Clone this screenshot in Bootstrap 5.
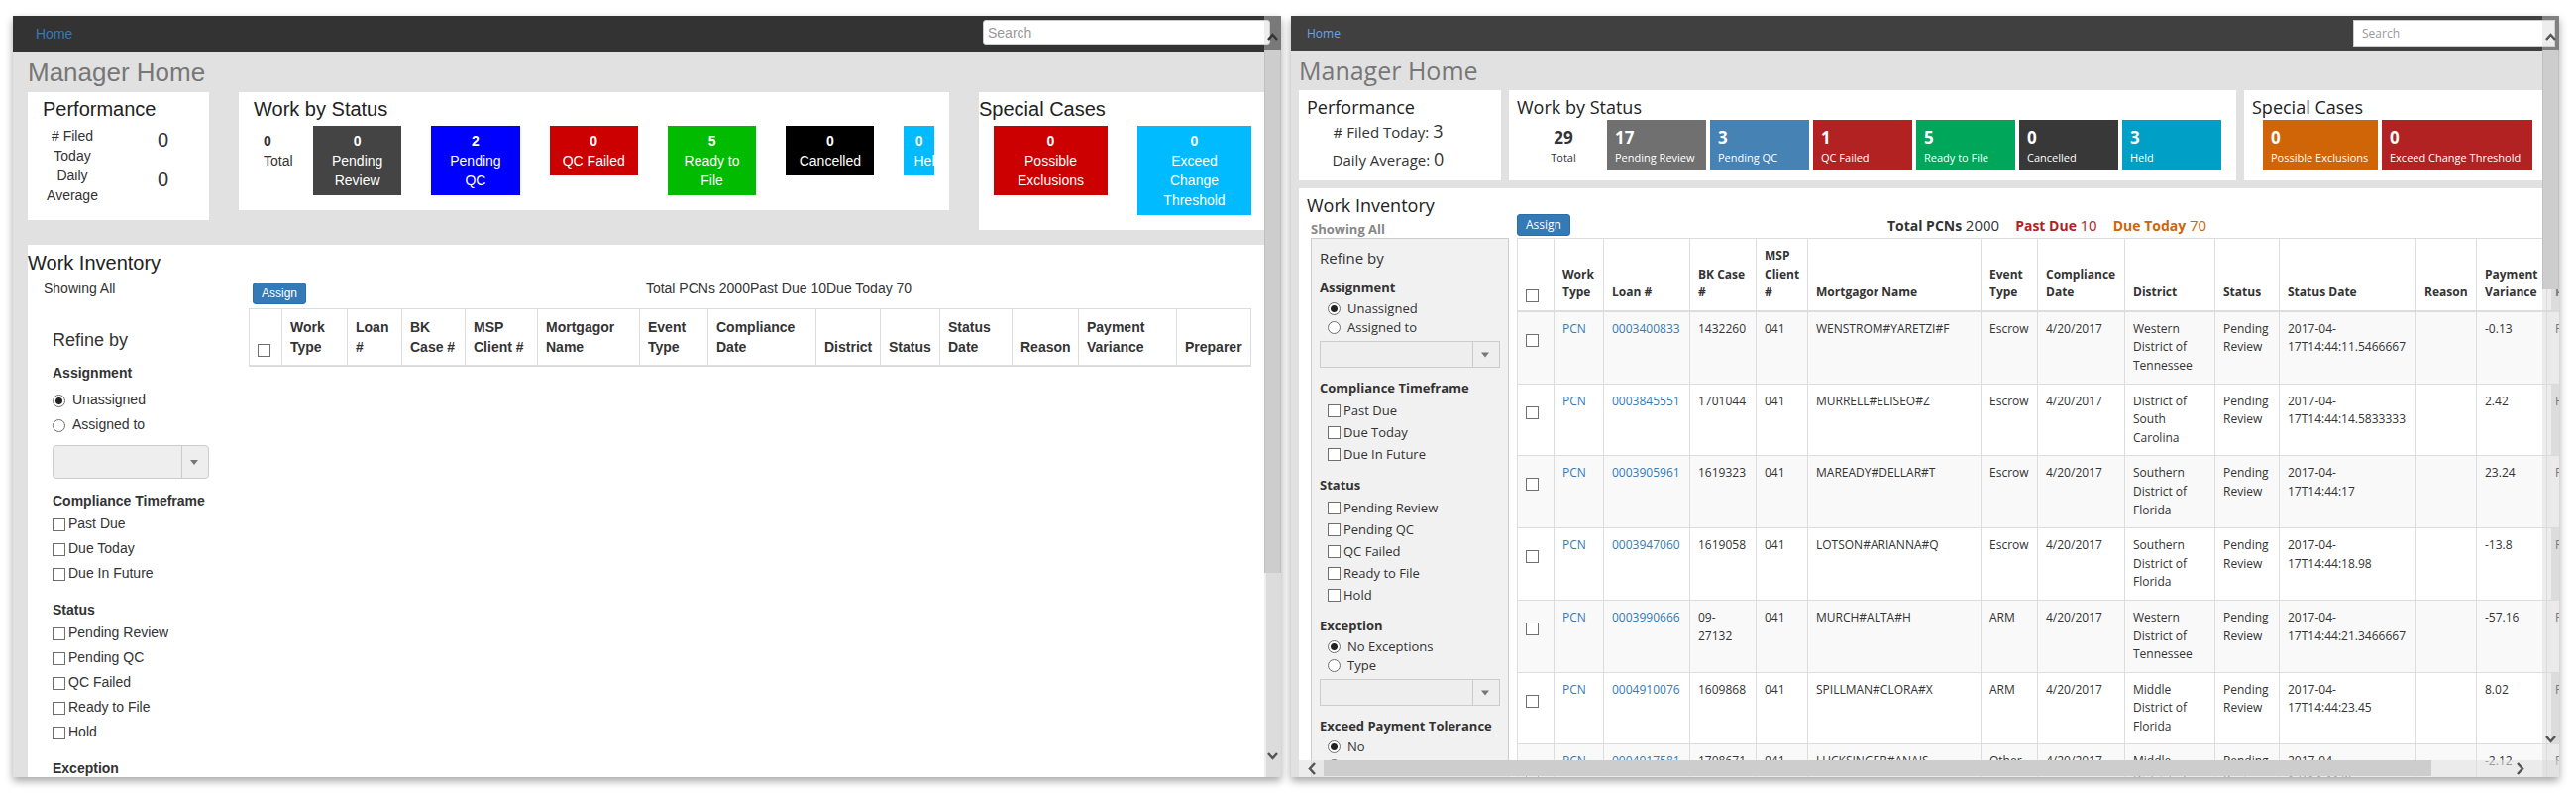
<!DOCTYPE html>
<html lang="en">
<head>
<meta charset="utf-8">
<meta name="viewport" content="width=device-width, initial-scale=1">
<title>Manager Home</title>
<link href="https://cdn.jsdelivr.net/npm/bootstrap@5.3.0/dist/css/bootstrap.min.css" rel="stylesheet">
<style>
  body { background: #fff; color: #333; font-family: "Liberation Sans", Arial, sans-serif; font-size: 14px; line-height: 20px; }
  a { color: #337ab7; text-decoration: none; }
  .desk { padding: 16px 17px 16px 13px; gap: 10px; }
  .screen { background: #e1e1e1; box-shadow: 0 4px 8px rgba(0,0,0,.35); min-width: 0; flex: 1 1 0; }
  .pane { background: #fff; min-width: 0; }
  h1, h2, h3, h4 { font-weight: 400; margin: 0; }
  h1 { color: #777; }
  h2 { color: #222; }
  .btn-assign { --bs-btn-color: #fff; --bs-btn-bg: #337ab7; --bs-btn-border-color: #2e6da4; --bs-btn-hover-bg: #286090; --bs-btn-hover-color: #fff;
    --bs-btn-padding-x: 8px; --bs-btn-padding-y: 1px; --bs-btn-font-size: 12px; --bs-btn-border-radius: 3px; line-height: 18px; }
  .tick { appearance: none; flex: none; width: 13px; height: 13px; margin: 0; border: 1px solid #707070; background: #fff; }
  .tick[type=radio] { border-radius: 50%; }
  .tick[type=radio]:checked { background: radial-gradient(circle, #222 0 3px, #fff 4px); }
  .pick { appearance: none; display: block; width: 100%; border: 1px solid #ccc; opacity: 1;
    background: url("data:image/svg+xml,%3Csvg xmlns='http://www.w3.org/2000/svg' width='27' height='34'%3E%3Cpath d='M.5 0v34' stroke='%23ccc'/%3E%3Cpath d='M9 15h8l-4 5z' fill='%23777'/%3E%3C/svg%3E") right center no-repeat #eee; }
  .find { border: 1px solid #ccc; background: #fff; color: #333; }
  .find::placeholder { color: #999; opacity: 1; }
  .grid-table { table-layout: fixed; margin: 0; border-collapse: collapse; color: #333; }
  .grid-table th, .grid-table td { border: 1px solid #ddd; padding: 8px; vertical-align: top; text-align: left; }
  .grid-table th { vertical-align: bottom; border-bottom-width: 2px; }
  .grid-table .tick { display: block; }

  /* overlay scroll bars */
  .bar-y { position: absolute; top: 0; right: 0; bottom: 0; width: 17px; background: rgba(214,214,214,.43); }
  .bar-y .thumb { position: absolute; left: 0; right: 0; top: 34px; background: #cdcdcd; border: 1px solid #c0c0c0; border-width: 0 1px; }
  .bar-y .up { position: absolute; left: 3px; top: 16px; }
  .bar-y .down { position: absolute; left: 3px; }
  .bar-x { position: absolute; left: 8px; right: 0; bottom: 0; height: 17px; background: rgba(225,225,225,.6); }
  .bar-x .thumb { position: absolute; left: 25px; right: 129px; top: 0; bottom: 1px; background: #cdcdcd; }
  .bar-x .back { position: absolute; left: 8px; top: 2px; }
  .bar-x .next { position: absolute; right: 34px; top: 2px; }

  /* first screen */
  .old .topbar { background: #333; height: 36px; padding: 0 11px 0 23px; }
  .old .find { width: 290px; height: 25px; border-radius: 3px; padding: 0 4px; margin-bottom: 3px; }
  .old .page { padding: 7px 15px 0; }
  .old h1 { font-size: 26px; line-height: 29px; margin-bottom: 5px; }
  .old h2 { font-size: 20px; line-height: 22px; margin-bottom: 6px; }
  .old .summary { display: grid; grid-template-columns: 183fr 717fr 290fr; gap: 30px; align-items: start; }
  .old .summary .pane { padding: 6px 15px 15px; }
  .old .perf { display: grid; grid-template-columns: 60px 1fr; column-gap: 15px; margin-right: -15px; text-align: center; }
  .old .perf dt { font-weight: 400; }
  .old .perf dd { font-size: 20px; line-height: 28px; margin: 0; }
  .old .tiles { gap: 30px; }
  .old .tile { flex: 0 0 13%; padding: 5px 10px; color: #fff; text-align: center; }
  .old .tile.sum { flex: 0 0 30px; min-width: 0; padding-right: 0; color: #333; text-align: left; }
  .old .tile.rest { flex: 1 1 0; min-width: 0; overflow: hidden; white-space: nowrap; }
  .old .cases .tile { flex: 1 1 0; }
  .old .flush { margin-left: -15px; }
  .old .inventory { margin-top: 15px; padding: 7px 15px 0 0; }
  .old .inventory h2 { margin-bottom: 5px; }
  .old .side { flex: 0 0 223px; padding-right: 40px; }
  .old .refine { padding: 32px 0 0 25px; }
  .old .refine h3 { font-size: 18px; line-height: 20px; margin-bottom: 1px; }
  .old .refine h4 { font-size: 14px; line-height: 20px; font-weight: 700; padding: 12px 0 3px; white-space: nowrap; }
  .old .opt { display: flex; align-items: center; gap: 3px; padding-bottom: 5px; }
  .old .opt.round { gap: 7px; }
  .old .opt .tick { margin-top: 3px; }
  .old .pick { height: 34px; border-radius: 4px; margin-top: 6px; }
  .old .tools { height: 26px; margin: 0 0 4px 4px; }

  /* second screen */
  .new { font-family: "Open Sans", "Noto Sans", sans-serif; font-size: 13px; }
  .new .topbar { background: #404040; height: 35px; padding: 0 4px 0 16px; font-size: 12px; }
  .new .topbar a { color: #68a5e6; }
  .new .find { width: 204px; height: 27px; padding: 0 8px; }
  .new .page { padding: 3px 8px 0; }
  .new h1 { font-size: 25px; line-height: 34px; margin-bottom: 3px; }
  .new h2 { font-size: 18px; line-height: 24px; margin-bottom: 1px; }
  .new .summary { display: grid; grid-template-columns: 204fr 734fr 310fr; gap: 8px; }
  .new .summary .pane { padding: 5px 8px 10px; }
  .new .perf { height: 51px; padding-right: 24px; text-align: center; font-size: 15px; line-height: 25px; }
  .new .perf div { margin-bottom: 3px; }
  .new .perf span { font-size: 18px; line-height: 18px; }
  .new .tiles { gap: 4px; padding-right: 7px; }
  .new .tile { flex: 1 1 0; padding: 7px 8px 4px; color: #fff; font-size: 11px; line-height: 18px; white-space: nowrap; }
  .new .tile b { font-size: 17px; line-height: 22px; }
  .new .tile.sum { flex: 0 0 87px; color: #333; text-align: center; padding-left: 15px; }
  .new .cases .tiles { padding: 0 11px; }
  .new .cases .tile { flex: 100 1 0; }
  .new .cases .tile.wide { flex-grow: 136; }
  .new .inventory { margin-top: 8px; }
  .new .side { flex: 0 0 212px; padding: 5px 0 0 12px; }
  .new .side h2 { margin: 0 0 3px -4px; }
  .new .showing { color: #888; font-weight: 700; line-height: 18px; }
  .new .refine { background: #f1f1f1; border: 1px solid #ccc; padding: 9px 8px 40px; }
  .new .refine h3 { font-size: 15px; line-height: 20px; }
  .new .refine h4 { font-size: 13px; line-height: 20px; font-weight: 700; padding: 10px 0 2px; white-space: nowrap; }
  .new .opt { display: flex; align-items: center; gap: 3px; padding-left: 8px; line-height: 22px; }
  .new .opt.round { gap: 7px; line-height: 19px; }
  .new .pick { height: 27px; margin-top: 4px; }
  .new .work { flex: 1 1 0; min-width: 0; padding: 26px 0 0 8px; }
  .new .tools { height: 22px; margin-bottom: 2px; }
  .new .counts { gap: 16px; padding-right: 28px; font-size: 14px; }
  .new .counts span { font-size: 15px; }
  .late { color: #b22222; }
  .today { color: #d06508; }
  .new .grid-table { width: 1140px; font-size: 12px; line-height: 1.55; }
  .new .grid-table tbody tr:nth-child(odd) { background: #f9f9f9; }
  .new .grid-table td .tick { margin-top: 14px; }
</style>
</head>
<body>
<div class="desk d-flex vh-100">

  <section class="screen old position-relative overflow-hidden d-flex flex-column">
    <nav class="topbar d-flex align-items-center justify-content-between flex-shrink-0">
      <a href="#">Home</a>
      <input class="find" type="search" placeholder="Search" aria-label="Search">
    </nav>
    <main class="page d-flex flex-column flex-grow-1">
      <h1>Manager Home</h1>
      <div class="summary">
        <div class="pane">
          <h2>Performance</h2>
          <dl class="perf mb-0">
            <dt># Filed Today</dt><dd>0</dd>
            <dt>Daily Average</dt><dd>0</dd>
          </dl>
        </div>
        <div class="pane">
          <h2>Work by Status</h2>
          <div class="tiles d-flex align-items-start">
            <div class="tile sum"><b class="d-block">0</b>Total</div>
            <div class="tile" style="background:#444"><b class="d-block">0</b>Pending Review</div>
            <div class="tile" style="background:#00f"><b class="d-block">2</b>Pending QC</div>
            <div class="tile" style="background:#c00"><b class="d-block">0</b>QC Failed</div>
            <div class="tile" style="background:#0b0"><b class="d-block">5</b>Ready to File</div>
            <div class="tile" style="background:#000"><b class="d-block">0</b>Cancelled</div>
            <div class="tile rest" style="background:#0bf"><b class="d-block">0</b>Held</div>
          </div>
        </div>
        <div class="pane cases">
          <h2 class="flush">Special Cases</h2>
          <div class="tiles d-flex align-items-start">
            <div class="tile" style="background:#c00"><b class="d-block">0</b>Possible Exclusions</div>
            <div class="tile" style="background:#0bf"><b class="d-block">0</b>Exceed Change Threshold</div>
          </div>
        </div>
      </div>
      <div class="pane inventory flex-grow-1">
        <h2>Work Inventory</h2>
        <div class="d-flex">
          <div class="side">
            <div class="ps-3">Showing All</div>
            <form class="refine">
              <h3>Refine by</h3>
              <h4>Assignment</h4>
              <div class="pt-1">
                <label class="opt round"><input class="tick" type="radio" name="a1" checked>Unassigned</label>
                <label class="opt round"><input class="tick" type="radio" name="a1">Assigned to</label>
              </div>
              <select class="pick" disabled aria-label="Assigned to"><option></option></select>
              <h4>Compliance Timeframe</h4>
              <label class="opt"><input class="tick" type="checkbox">Past Due</label>
              <label class="opt"><input class="tick" type="checkbox">Due Today</label>
              <label class="opt"><input class="tick" type="checkbox">Due In Future</label>
              <h4>Status</h4>
              <label class="opt"><input class="tick" type="checkbox">Pending Review</label>
              <label class="opt"><input class="tick" type="checkbox">Pending QC</label>
              <label class="opt"><input class="tick" type="checkbox">QC Failed</label>
              <label class="opt"><input class="tick" type="checkbox">Ready to File</label>
              <label class="opt"><input class="tick" type="checkbox">Hold</label>
              <h4>Exception</h4>
            </form>
          </div>
          <div class="flex-grow-1">
            <div class="tools d-flex">
              <button class="btn btn-assign align-self-end" type="button">Assign</button>
              <div class="flex-grow-1 text-center">Total PCNs 2000Past Due 10Due Today 70</div>
            </div>
            <table class="grid-table w-100">
              <colgroup>
                <col style="width:33px"><col style="width:66px"><col style="width:55px"><col style="width:64px"><col style="width:73px"><col style="width:103px"><col style="width:69px"><col style="width:109px"><col style="width:65px"><col style="width:60px"><col style="width:73px"><col style="width:67px"><col style="width:99px"><col style="width:75px">
              </colgroup>
              <thead>
                <tr>
                  <th><input class="tick" type="checkbox" aria-label="Select all"></th>
                  <th>Work Type</th><th>Loan #</th><th>BK Case #</th><th>MSP Client #</th><th>Mortgagor Name</th><th>Event Type</th><th>Compliance Date</th><th>District</th><th>Status</th><th>Status Date</th><th>Reason</th><th>Payment Variance</th><th>Preparer</th>
                </tr>
              </thead>
            </table>
          </div>
        </div>
      </div>
    </main>
    <div class="bar-y">
      <div class="thumb" style="height:528px"></div>
      <svg class="up" width="11" height="10" viewBox="0 0 11 10"><path d="M1 8l4.500-5L10 8" fill="none" stroke="#333" stroke-width="2.500"/></svg>
      <svg class="down" style="bottom:16px" width="11" height="10" viewBox="0 0 11 10"><path d="M1 2l4.500 5L10 2" fill="none" stroke="#555" stroke-width="2.500"/></svg>
    </div>
  </section>

  <section class="screen new position-relative overflow-hidden d-flex flex-column">
    <nav class="topbar d-flex align-items-center justify-content-between flex-shrink-0">
      <a href="#">Home</a>
      <input class="find" type="search" placeholder="Search" aria-label="Search">
    </nav>
    <main class="page d-flex flex-column flex-grow-1">
      <h1>Manager Home</h1>
      <div class="summary">
        <div class="pane">
          <h2>Performance</h2>
          <div class="perf">
            <div># Filed Today: <span>3</span></div>
            <div>Daily Average: <span>0</span></div>
          </div>
        </div>
        <div class="pane">
          <h2>Work by Status</h2>
          <div class="tiles d-flex">
            <div class="tile sum"><b class="d-block">29</b>Total</div>
            <div class="tile" style="background:#707070"><b class="d-block">17</b>Pending Review</div>
            <div class="tile" style="background:#4682b4"><b class="d-block">3</b>Pending QC</div>
            <div class="tile" style="background:#b22222"><b class="d-block">1</b>QC Failed</div>
            <div class="tile" style="background:#00a65a"><b class="d-block">5</b>Ready to File</div>
            <div class="tile" style="background:#383838"><b class="d-block">0</b>Cancelled</div>
            <div class="tile" style="background:#00a0c6"><b class="d-block">3</b>Held</div>
          </div>
        </div>
        <div class="pane cases">
          <h2>Special Cases</h2>
          <div class="tiles d-flex">
            <div class="tile" style="background:#d06508"><b class="d-block">0</b>Possible Exclusions</div>
            <div class="tile wide" style="background:#b22222"><b class="d-block">0</b>Exceed Change Threshold</div>
          </div>
        </div>
      </div>
      <div class="pane inventory d-flex align-items-start">
        <div class="side">
          <h2>Work Inventory</h2>
          <div class="showing">Showing All</div>
          <form class="refine">
            <h3>Refine by</h3>
            <h4>Assignment</h4>
            <label class="opt round"><input class="tick" type="radio" name="a2" checked>Unassigned</label>
            <label class="opt round"><input class="tick" type="radio" name="a2">Assigned to</label>
            <select class="pick" disabled aria-label="Assigned to"><option></option></select>
            <h4>Compliance Timeframe</h4>
            <label class="opt"><input class="tick" type="checkbox">Past Due</label>
            <label class="opt"><input class="tick" type="checkbox">Due Today</label>
            <label class="opt"><input class="tick" type="checkbox">Due In Future</label>
            <h4>Status</h4>
            <label class="opt"><input class="tick" type="checkbox">Pending Review</label>
            <label class="opt"><input class="tick" type="checkbox">Pending QC</label>
            <label class="opt"><input class="tick" type="checkbox">QC Failed</label>
            <label class="opt"><input class="tick" type="checkbox">Ready to File</label>
            <label class="opt"><input class="tick" type="checkbox">Hold</label>
            <h4>Exception</h4>
            <label class="opt round"><input class="tick" type="radio" name="e2" checked>No Exceptions</label>
            <label class="opt round"><input class="tick" type="radio" name="e2">Type</label>
            <select class="pick" disabled aria-label="Exception type"><option></option></select>
            <h4>Exceed Payment Tolerance</h4>
            <label class="opt round"><input class="tick" type="radio" name="t2" checked>No</label>
            <label class="opt round"><input class="tick" type="radio" name="t2">Yes</label>
          </form>
        </div>
        <div class="work">
          <div class="tools d-flex">
            <button class="btn btn-assign align-self-end" type="button">Assign</button>
            <div class="counts flex-grow-1 d-flex justify-content-center align-items-end">
              <div><b>Total PCNs</b> <span>2000</span></div>
              <div class="late"><b>Past Due</b> <span>10</span></div>
              <div class="today"><b>Due Today</b> <span>70</span></div>
            </div>
          </div>
          <table class="grid-table">
            <colgroup>
              <col style="width:37px"><col style="width:50px"><col style="width:87px"><col style="width:67px"><col style="width:52px"><col style="width:175px"><col style="width:57px"><col style="width:88px"><col style="width:91px"><col style="width:65px"><col style="width:138px"><col style="width:61px"><col style="width:71px"><col>
            </colgroup>
            <thead>
              <tr>
                <th><input class="tick" type="checkbox" aria-label="Select all"></th>
                <th>Work Type</th><th>Loan #</th><th>BK Case #</th><th>MSP Client #</th><th>Mortgagor Name</th><th>Event Type</th><th>Compliance Date</th><th>District</th><th>Status</th><th>Status Date</th><th>Reason</th><th>Payment Variance</th><th>Preparer</th>
              </tr>
            </thead>
            <tbody>
              <tr><td><input class="tick" type="checkbox" aria-label="Select 0003400833"></td><td><a href="#">PCN</a></td><td><a href="#">0003400833</a></td><td>1432260</td><td>041</td><td>WENSTROM#YARETZI#F</td><td>Escrow</td><td>4/20/2017</td><td>Western District of Tennessee</td><td>Pending Review</td><td>2017-04-<br>17T14:44:11.5466667</td><td></td><td>-0.13</td><td>P</td></tr>
              <tr><td><input class="tick" type="checkbox" aria-label="Select 0003845551"></td><td><a href="#">PCN</a></td><td><a href="#">0003845551</a></td><td>1701044</td><td>041</td><td>MURRELL#ELISEO#Z</td><td>Escrow</td><td>4/20/2017</td><td>District of South Carolina</td><td>Pending Review</td><td>2017-04-<br>17T14:44:14.5833333</td><td></td><td>2.42</td><td>P</td></tr>
              <tr><td><input class="tick" type="checkbox" aria-label="Select 0003905961"></td><td><a href="#">PCN</a></td><td><a href="#">0003905961</a></td><td>1619323</td><td>041</td><td>MAREADY#DELLAR#T</td><td>Escrow</td><td>4/20/2017</td><td>Southern District of Florida</td><td>Pending Review</td><td>2017-04-<br>17T14:44:17</td><td></td><td>23.24</td><td>P</td></tr>
              <tr><td><input class="tick" type="checkbox" aria-label="Select 0003947060"></td><td><a href="#">PCN</a></td><td><a href="#">0003947060</a></td><td>1619058</td><td>041</td><td>LOTSON#ARIANNA#Q</td><td>Escrow</td><td>4/20/2017</td><td>Southern District of Florida</td><td>Pending Review</td><td>2017-04-<br>17T14:44:18.98</td><td></td><td>-13.8</td><td>P</td></tr>
              <tr><td><input class="tick" type="checkbox" aria-label="Select 0003990666"></td><td><a href="#">PCN</a></td><td><a href="#">0003990666</a></td><td>09-27132</td><td>041</td><td>MURCH#ALTA#H</td><td>ARM</td><td>4/20/2017</td><td>Western District of Tennessee</td><td>Pending Review</td><td>2017-04-<br>17T14:44:21.3466667</td><td></td><td>-57.16</td><td>P</td></tr>
              <tr><td><input class="tick" type="checkbox" aria-label="Select 0004910076"></td><td><a href="#">PCN</a></td><td><a href="#">0004910076</a></td><td>1609868</td><td>041</td><td>SPILLMAN#CLORA#X</td><td>ARM</td><td>4/20/2017</td><td>Middle District of Florida</td><td>Pending Review</td><td>2017-04-<br>17T14:44:23.45</td><td></td><td>8.02</td><td>P</td></tr>
              <tr><td><input class="tick" type="checkbox" aria-label="Select 0004917581"></td><td><a href="#">PCN</a></td><td><a href="#">0004917581</a></td><td>1708671</td><td>041</td><td>LUCKSINGER#ANAIS</td><td>Other</td><td>4/20/2017</td><td>Middle District of Florida</td><td>Pending Review</td><td>2017-04-<br>17T14:44:25</td><td></td><td>-2.12</td><td>P</td></tr>
            </tbody>
          </table>
        </div>
      </div>
    </main>
    <div class="bar-x">
      <div class="thumb"></div>
      <svg class="back" width="10" height="13" viewBox="0 0 10 13"><path d="M8 1L3 6.500 8 12" fill="none" stroke="#555" stroke-width="2.500"/></svg>
      <svg class="next" width="10" height="13" viewBox="0 0 10 13"><path d="M2 1l5 5.500L2 12" fill="none" stroke="#555" stroke-width="2.500"/></svg>
    </div>
    <div class="bar-y">
      <div class="thumb" style="height:242px"></div>
      <svg class="up" width="11" height="10" viewBox="0 0 11 10"><path d="M1 8l4.500-5L10 8" fill="none" stroke="#555" stroke-width="2.500"/></svg>
      <svg class="down" style="bottom:33px" width="11" height="10" viewBox="0 0 11 10"><path d="M1 2l4.500 5L10 2" fill="none" stroke="#555" stroke-width="2.500"/></svg>
    </div>
  </section>

</div>
<script src="https://cdn.jsdelivr.net/npm/bootstrap@5.3.0/dist/js/bootstrap.bundle.min.js"></script>
</body>
</html>
